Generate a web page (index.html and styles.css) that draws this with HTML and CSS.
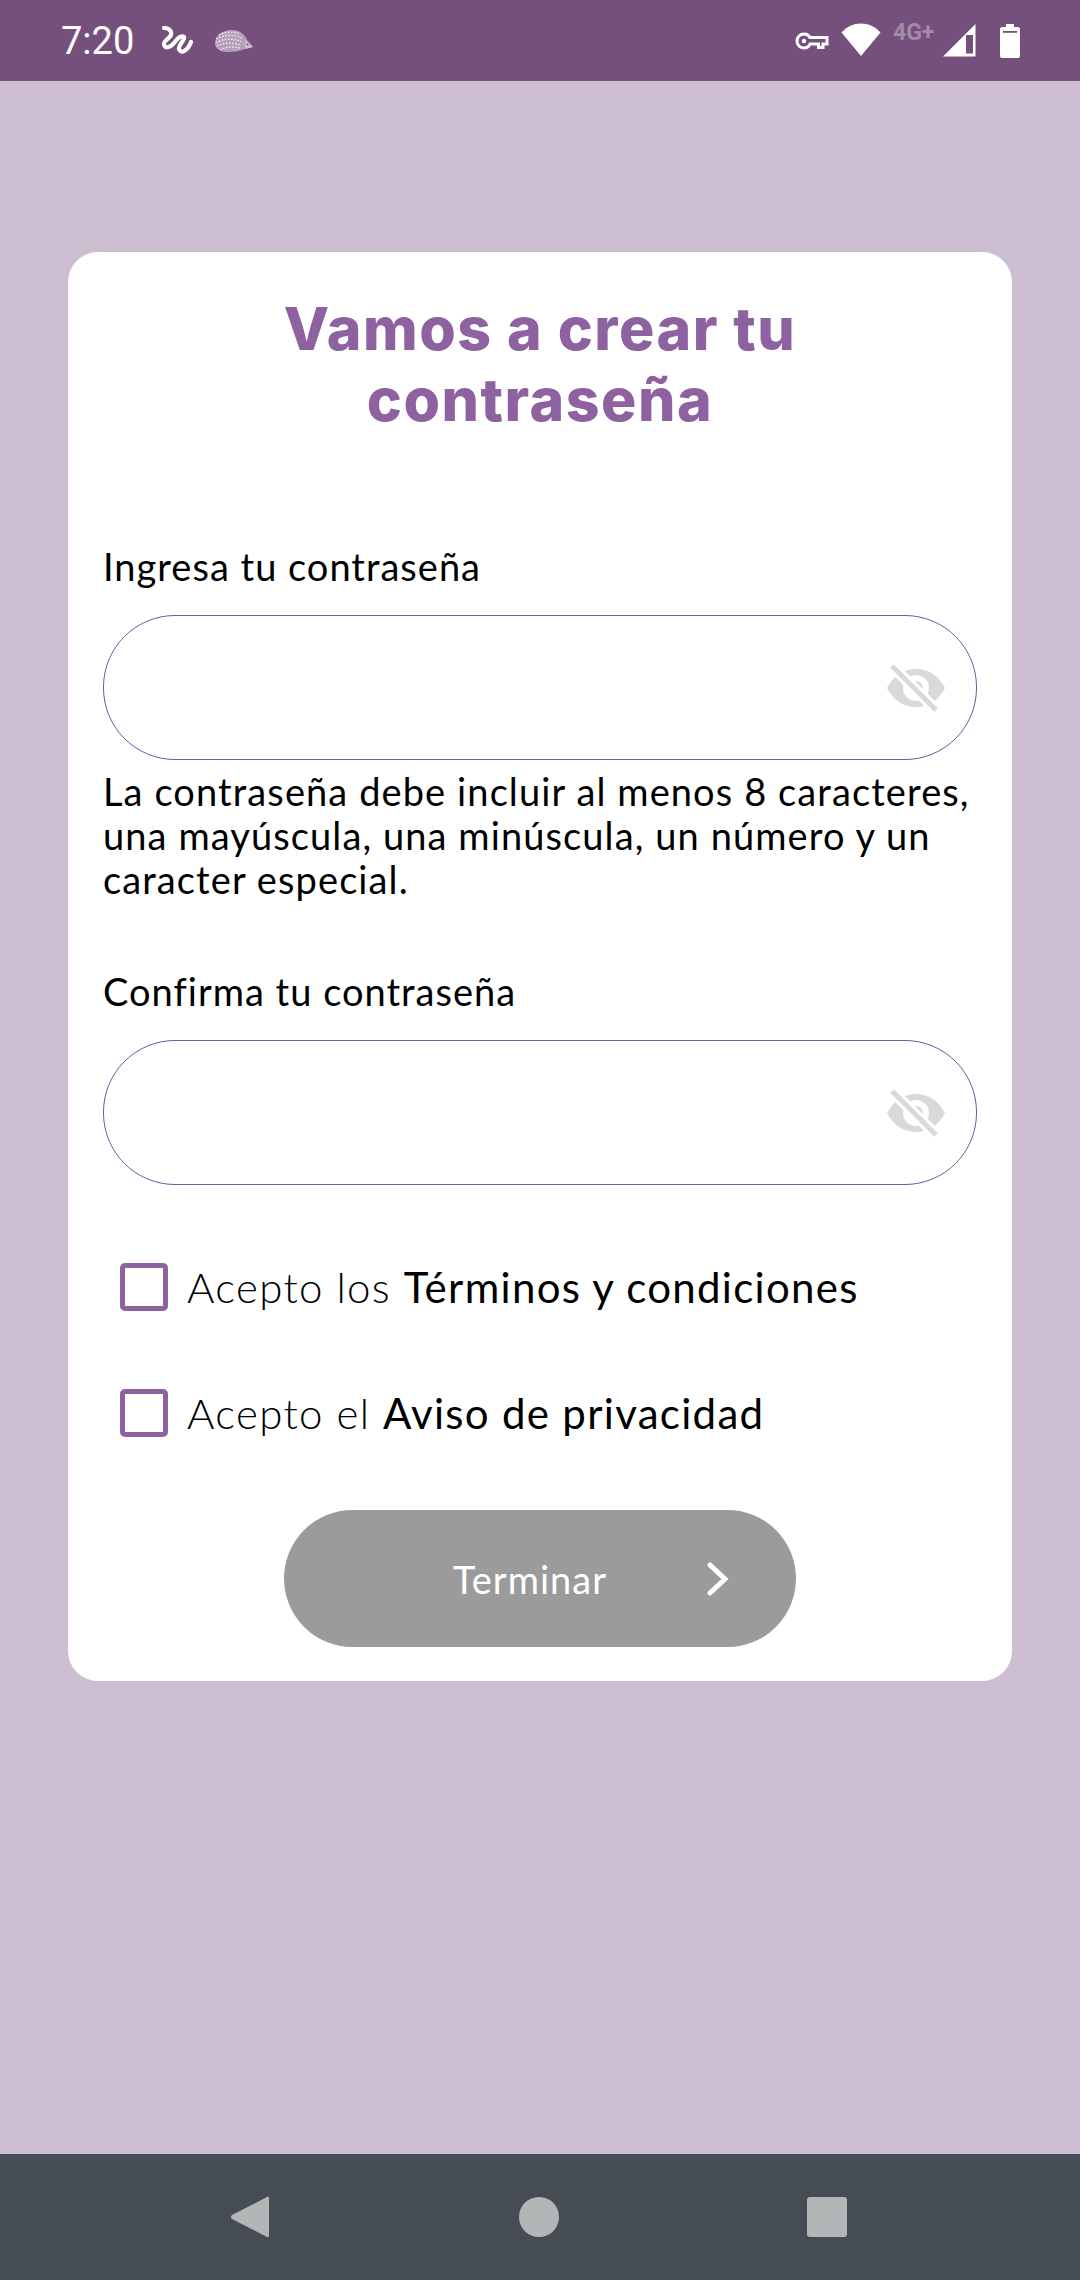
FILE: index.html
```html
<!DOCTYPE html>
<html lang="es">

<head>
    <meta charset="UTF-8">
    <meta name="viewport" content="width=device-width, initial-scale=1.0">
    <title>Crear contraseña</title>
    <link rel="stylesheet" href="styles.css">
</head>

<body>
    <div class="screen">
        <!-- barra de estado -->
        <header class="status">
            <div class="status-left">
                <span class="time">7:20</span>
                <svg class="ic-squiggle" width="32" height="30" viewBox="0 0 32 30">
                    <path d="M3 2 C8 2 11 5 10 9 C9 12 3 14 3 18 C3 23 9 22 13 17 C16 13 20 9 23 11 C25 13 17 19 18 23 C20 29 27 24 30 16"
                        fill="none" stroke="#fff" stroke-width="4.200" stroke-linecap="round" />
                </svg>
                <svg class="ic-hedgehog" width="40" height="24" viewBox="0 0 40 24">
                    <path d="M1 14 C1 6 9 1 18 1 C26 1 31 6 33 11 L39 18 L31 20 C24 23 12 24 7 22 C3 20 1 18 1 14 Z"
                        fill="#b5a0ba" />
                    <g fill="none" stroke="#f2ecf3" stroke-width="1.300" stroke-dasharray="1.600 1.500">
                        <path d="M5 6 C10 2.500 20 2 26 5" />
                        <path d="M2.500 10 C9 6 21 5 28 9" />
                        <path d="M2 13.500 C9 10 19 9 27 12.500" />
                        <path d="M3 17 C9 14 18 13 26 16" />
                        <path d="M6 20.500 C12 18 20 17 27 19.500" />
                    </g>
                    <path d="M31 11 L39 18 L31 20 Z" fill="#cdbfd1" />
                    <circle cx="33.500" cy="15.500" r="1" fill="#76507c" />
                </svg>
            </div>
            <div class="status-right">
                <svg class="ic-key" width="34" height="18" viewBox="0 0 34 18">
                    <path d="M9 2 C12 2 14 3.500 15 5.500 H32 V12 H28 V15.500 H23.500 V12 H15 C14 14.500 12 16 9 16 C5 16 2 13 2 9 C2 5 5 2 9 2 Z"
                        fill="none" stroke="#fff" stroke-width="3" />
                    <circle cx="9" cy="9" r="2.200" fill="#fff" />
                </svg>
                <svg class="ic-wifi" width="40" height="33" viewBox="0 0 40 33">
                    <path d="M0.500 9.500 C11 -2.500 29 -2.500 39.500 9.500 L20 33 Z" fill="#fff" />
                </svg>
                <span class="net">4G+</span>
                <svg class="ic-signal" width="33" height="33" viewBox="0 0 33 33">
                    <path d="M0 32.500 L32.500 0 V32.500 Z" fill="#fff" />
                    <path d="M23 11 H30 V29.500 H23 Z" fill="#76507c" />
                </svg>
                <svg class="ic-battery" width="20" height="34" viewBox="0 0 20 34">
                    <path d="M6 0 H14 V3 H18 C19 3 20 4 20 5 V32 C20 33 19 34 18 34 H2 C1 34 0 33 0 32 V5 C0 4 1 3 2 3 H6 Z"
                        fill="#fff" />
                    <rect x="3" y="7" width="14" height="1.800" fill="#76507c" />
                </svg>
            </div>
        </header>

        <main class="content">
            <section class="card">
                <h1 class="title">Vamos a crear tu<br>contraseña</h1>

                <label class="field-label">Ingresa tu contraseña</label>
                <div class="input-box">
                    <svg class="ic-eye" width="60" height="50" viewBox="0 0 60 50">
                        <path d="M1 25 C8 12 18 6 30 6 C42 6 52 12 59 25 C52 38 42 44 30 44 C18 44 8 38 1 25 Z" fill="#d8d9da" />
                        <circle cx="30" cy="25" r="13" fill="#fff" />
                        <circle cx="30" cy="25" r="7" fill="#d8d9da" />
                        <path d="M6 3 L50 47" stroke="#fff" stroke-width="11" />
                        <path d="M6 3 L50 47" stroke="#d8d9da" stroke-width="5" />
                    </svg>
                </div>
                <p class="hint">La contraseña debe incluir al menos 8 caracteres, una mayúscula, una minúscula, un número y un caracter especial.</p>

                <label class="field-label second">Confirma tu contraseña</label>
                <div class="input-box">
                    <svg class="ic-eye" width="60" height="50" viewBox="0 0 60 50">
                        <path d="M1 25 C8 12 18 6 30 6 C42 6 52 12 59 25 C52 38 42 44 30 44 C18 44 8 38 1 25 Z" fill="#d8d9da" />
                        <circle cx="30" cy="25" r="13" fill="#fff" />
                        <circle cx="30" cy="25" r="7" fill="#d8d9da" />
                        <path d="M6 3 L50 47" stroke="#fff" stroke-width="11" />
                        <path d="M6 3 L50 47" stroke="#d8d9da" stroke-width="5" />
                    </svg>
                </div>

                <div class="checks">
                    <div class="check-row">
                        <span class="checkbox"></span>
                        <span class="check-text">Acepto los <b>Términos y condiciones</b></span>
                    </div>
                    <div class="check-row">
                        <span class="checkbox"></span>
                        <span class="check-text">Acepto el <b>Aviso de privacidad</b></span>
                    </div>
                </div>

                <div class="btn">
                    <span class="btn-text">Terminar</span>
                    <svg width="22" height="34" viewBox="0 0 22 34">
                        <path d="M3 3 L18 17 L3 31" fill="none" stroke="#fff" stroke-width="5" stroke-linecap="round" />
                    </svg>
                </div>
            </section>
        </main>

        <!-- navegación -->
        <nav class="navbar">
            <svg width="40" height="44" viewBox="0 0 40 44">
                <path d="M37 2 C38 1.500 39 2 39 3 V41 C39 42 38 42.500 37 42 L2 24 C0.500 23 0.500 21 2 20 Z" fill="#b2b6b7" />
            </svg>
            <span class="nav-circle"></span>
            <span class="nav-square"></span>
        </nav>
    </div>
</body>

</html>
```

FILE: styles.css
```css
* {
    box-sizing: border-box;
}

body {
    margin: 0;
    font-family: Lato, "Open Sans", sans-serif;
    color: #000;
}

.screen {
    width: 1080px;
    height: 2280px;
    display: flex;
    flex-direction: column;
    background: #cdbfd1;
    overflow: hidden;
}

/* status bar */
.status {
    height: 81px;
    background: #76507c;
    display: flex;
    justify-content: space-between;
    padding: 0 61px;
    color: #fff;
}

.status-left {
    display: flex;
    align-items: center;
}

.time {
    font-family: Roboto, sans-serif;
    font-size: 38px;
    width: 100px;
}

.ic-hedgehog {
    margin-left: 21px;
}

.status-right {
    display: flex;
    align-items: center;
    margin-right: -1px;
}

.ic-wifi {
    margin-left: 12px;
    margin-top: -2px;
}

.net {
    font-family: Roboto, sans-serif;
    font-weight: 700;
    font-size: 23px;
    color: #a28aa8;
    width: 50px;
    margin-left: 12px;
    margin-top: -16px;
}

.ic-battery {
    margin-left: 24px;
}

/* card */
.content {
    flex: 1;
    padding: 171px 68px 0;
}

.card {
    height: 1429px;
    background: #fff;
    border-radius: 30px;
    padding: 41px 35px 0;
}

.title {
    margin: 0 0 109px;
    text-align: center;
    color: #8e62a0;
    font-family: Inter, sans-serif;
    font-size: 59px;
    font-weight: 800;
    letter-spacing: 1.500px;
    line-height: 71px;
}

.field-label {
    display: block;
    font-size: 38px;
    letter-spacing: 1px;
    line-height: 44px;
    margin-bottom: 27px;
}

.field-label.second {
    margin-top: 68px;
}

.input-box {
    height: 145px;
    border: 1px solid #7355a0;
    border-radius: 72px;
    display: flex;
    align-items: center;
    justify-content: flex-end;
    padding-right: 30px;
}

.hint {
    margin: 9px 0 0;
    font-size: 38px;
    letter-spacing: 1.100px;
    line-height: 44px;
}

/* checkboxes */
.checks {
    margin-top: 78px;
    padding-left: 17px;
    display: flex;
    flex-direction: column;
    gap: 78px;
}

.check-row {
    display: flex;
    align-items: center;
    gap: 19px;
    height: 48px;
}

.checkbox {
    width: 48px;
    height: 48px;
    border: 5px solid #8e62a0;
    border-radius: 5px;
}

.check-text {
    font-size: 42px;
    font-weight: 300;
    letter-spacing: 1.300px;
}

.check-text b {
    font-weight: 400;
}

.btn {
    width: 512px;
    height: 137px;
    margin: 73px auto 0;
    background: #9b9b9b;
    border-radius: 69px;
    color: #fff;
    display: flex;
    align-items: center;
    padding-left: 169px;
    gap: 100px;
}

.btn-text {
    font-size: 38px;
    letter-spacing: 1px;
}

/* nav bar */
.navbar {
    height: 126px;
    background: #464c53;
    display: flex;
    align-items: center;
    padding: 0 233px 0 230px;
    justify-content: space-between;
}

.nav-circle {
    width: 40px;
    height: 40px;
    border-radius: 50%;
    background: #b2b6b7;
}

.nav-square {
    width: 40px;
    height: 40px;
    border-radius: 3px;
    background: #b2b6b7;
}
```
